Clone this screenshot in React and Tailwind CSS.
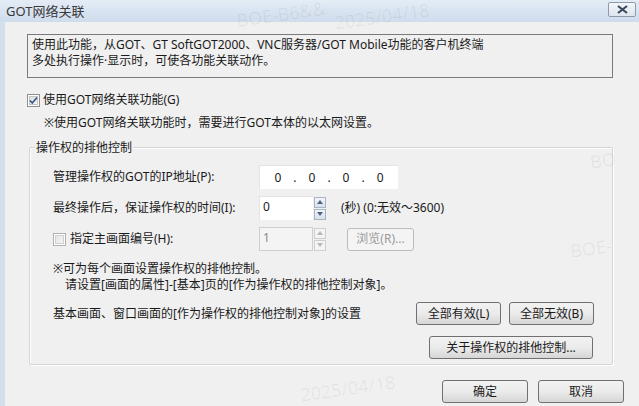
import React from "react";

const font = { fontFamily: '"Noto Sans", "Noto Sans CJK SC", sans-serif' };

function CheckBox({ checked, disabled }) {
  return (
    <svg width="13" height="13" viewBox="0 0 13 13" className="shrink-0">
      <defs>
        <linearGradient id={disabled ? "cbd" : "cbg"} x1="0" y1="0" x2="1" y2="1">
          <stop offset="0" stopColor={disabled ? "#e6e6e6" : "#dcdcdc"} />
          <stop offset="1" stopColor={disabled ? "#f4f4f4" : "#fbfbfb"} />
        </linearGradient>
      </defs>
      <rect x="0.5" y="0.5" width="12" height="12" fill="#fff" stroke={disabled ? "#b1b1b1" : "#8f8f8f"} />
      <rect x="2.5" y="2.5" width="8" height="8" fill={`url(#${disabled ? "cbd" : "cbg"})`} stroke={disabled ? "#d0d0d0" : "#c4c4c4"} />
      {checked && (
        <path d="M3 6.5 L5.3 9 L10 3.5" fill="none" stroke="#3b5b8a" strokeWidth="1.8" />
      )}
    </svg>
  );
}

function Spinner({ disabled }) {
  const arrow = disabled ? "#b8b8b8" : "#4d6185";
  const cls = disabled
    ? "h-[11px] w-[12px] border border-[#cfcfcf] bg-[#f4f4f4] flex items-center justify-center"
    : "h-[11px] w-[12px] border border-[#a9b3c2] bg-gradient-to-b from-[#f2f5f9] to-[#d9e0ea] flex items-center justify-center";
  return (
    <div className="flex flex-col gap-[1px] ml-[1px]">
      <div className={cls}>
        <svg width="6" height="4" viewBox="0 0 6 4"><path d="M0 4 L3 0 L6 4Z" fill={arrow} /></svg>
      </div>
      <div className={cls}>
        <svg width="6" height="4" viewBox="0 0 6 4"><path d="M0 0 L3 4 L6 0Z" fill={arrow} /></svg>
      </div>
    </div>
  );
}

function Btn({ children, w, disabled }) {
  return (
    <div
      className={`h-[23px] flex items-center justify-center rounded-[3px] border text-[12px] ${w} ${
        disabled
          ? "border-[#bcbcbc] bg-[#f4f4f4] text-[#9a9a9a]"
          : "border-[#707070] bg-gradient-to-b from-[#f2f2f2] via-[#ebebeb] to-[#d6d6d6] text-[#1a1a1a]"
      }`}
    >
      {children}
    </div>
  );
}

function Watermark({ children, className }) {
  return (
    <div className={`absolute pointer-events-none text-[18px] leading-[20px] text-[#000]/[0.06] whitespace-nowrap -rotate-[8deg] ${className}`}>
      {children}
    </div>
  );
}

export default function App() {
  return (
    <div className="w-[639px] h-[406px] overflow-hidden relative bg-[#f0f0f0] text-[#1a1a1a] text-[12px] leading-[16px]" style={font}>
      {/* title bar */}
      <div className="h-[22px] bg-gradient-to-b from-[#e4ecf6] to-[#cfdcec] flex items-center justify-between pl-[6px] pr-[3px]">
        <div className="text-[13px] text-[#3a3a3a]">GOT网络关联</div>
        <div className="w-[28px] h-[15px] mb-[3px] rounded-[2px] border border-[#8f9aa8] bg-gradient-to-b from-[#f3f6fa] to-[#dde5ef] flex items-center justify-center">
          <svg width="11" height="9" viewBox="0 0 11 9">
            <path d="M1 1 L10 8 M10 1 L1 8" stroke="#3c4a5e" strokeWidth="2.2" />
          </svg>
        </div>
      </div>

      <div className="flex h-[384px]">
        <div className="w-[5px] bg-[#d3dfec]" />
        <div className="flex-1 flex flex-col pl-[22px]">
          {/* description */}
          <div className="mt-[12px] w-[586px] h-[44px] border border-[#7a7a7a] pl-[4px] pt-[2px]">
            <div>使用此功能，从GOT、GT SoftGOT2000、VNC服务器/GOT Mobile功能的客户机终端</div>
            <div>多处执行操作·显示时，可使各功能关联动作。</div>
          </div>

          <div className="mt-[14px] flex items-center gap-[3px] h-[16px]">
            <CheckBox checked />
            <span>使用GOT网络关联功能(G)</span>
          </div>
          <div className="mt-[7px] ml-[17px] h-[16px]">※使用GOT网络关联功能时，需要进行GOT本体的以太网设置。</div>

          {/* group box */}
          <div className="mt-[9px] relative ml-[2px] w-[584px]">
            <div className="ml-[6px] h-[16px] relative z-10 bg-[#f0f0f0] w-fit px-[1px]">操作权的排他控制</div>
            <div className="-mt-[9px] h-[218px] border border-[#d5d5d5] shadow-[inset_1px_1px_0_#fff,1px_1px_0_#fff] rounded-[2px] pl-[23px] pt-[17px] flex flex-col">
              <div className="flex items-center h-[24px]">
                <div className="w-[206px]">管理操作权的GOT的IP地址(P):</div>
                <div className="w-[139px] h-[24px] bg-white flex items-center justify-center gap-[12px] border-t border-l border-[#e3e3e3]">
                  <span>0</span><span>.</span><span>0</span><span>.</span><span>0</span><span>.</span><span>0</span>
                </div>
              </div>

              <div className="flex items-center h-[24px] mt-[7px]">
                <div className="w-[206px]">最终操作后，保证操作权的时间(I):</div>
                <div className="w-[54px] h-[24px] bg-white pl-[3px] pt-[2px] border-t border-l border-[#e3e3e3]">0</div>
                <Spinner />
                <div className="ml-[15px]">(秒) (0:无效～3600)</div>
              </div>

              <div className="flex items-center h-[24px] mt-[7px]">
                <div className="w-[206px] flex items-center gap-[4px]">
                  <CheckBox disabled />
                  <span>指定主画面编号(H):</span>
                </div>
                <div className="w-[54px] h-[24px] bg-[#f4f4f4] border border-[#cfcfcf] pl-[3px] pt-[2px] text-[#8a8a8a]">1</div>
                <Spinner disabled />
                <div className="ml-[21px]">
                  <Btn w="w-[67px]" disabled>浏览(R)...</Btn>
                </div>
              </div>

              <div className="mt-[10px]">※可为每个画面设置操作权的排他控制。</div>
              <div className="ml-[12px]">请设置[画面的属性]-[基本]页的[作为操作权的排他控制对象]。</div>

              <div className="mt-[9px] flex items-center">
                <div className="w-[363px]">基本画面、窗口画面的[作为操作权的排他控制对象]的设置</div>
                <Btn w="w-[85px]">全部有效(L)</Btn>
                <div className="ml-[8px]">
                  <Btn w="w-[85px]">全部无效(B)</Btn>
                </div>
              </div>

              <div className="mt-[11px] flex justify-end pr-[19px]">
                <Btn w="w-[164px]">关于操作权的排他控制...</Btn>
              </div>
            </div>
          </div>

          <div className="mt-[15px] flex justify-end pr-[15px] gap-[10px]">
            <Btn w="w-[86px]">确定</Btn>
            <Btn w="w-[86px]">取消</Btn>
          </div>
        </div>
      </div>

      {/* watermarks */}
      <Watermark className="left-[236px] top-[4px]">BOE-B6&amp;&amp;</Watermark>
      <Watermark className="left-[334px] top-[6px]">2025/04/18</Watermark>
      <Watermark className="left-[590px] top-[150px]">BO</Watermark>
      <Watermark className="left-[570px] top-[238px]">BOE-</Watermark>
      <Watermark className="left-[300px] top-[378px]">2025/04/18</Watermark>
    </div>
  );
}
